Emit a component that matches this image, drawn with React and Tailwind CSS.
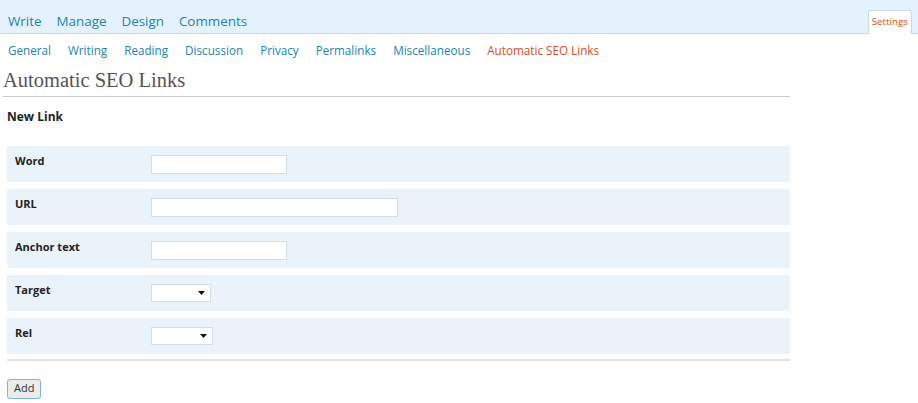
import { useState } from "react";

const mainMenu = ["Write", "Manage", "Design", "Comments"];
const subMenu = ["General", "Writing", "Reading", "Discussion", "Privacy", "Permalinks", "Miscellaneous"];

const Select = ({ width }) => (
  <div className={`${width} h-[18px] bg-white border border-[#d1dfea] flex items-center justify-end pr-[5px]`}>
    <svg width="7" height="4" viewBox="0 0 7 4">
      <path d="M0 0h7L3.5 4z" fill="#111" />
    </svg>
  </div>
);

const Row = ({ label, children }) => (
  <div className="flex h-[36px] bg-[#eaf2fa]">
    <div className="w-[144px] pl-[8px] pt-[7px] text-[11px] font-bold text-[#222]">{label}</div>
    <div className="pt-[9px]">{children}</div>
  </div>
);

export default function App() {
  const [form, setForm] = useState({ word: "", url: "", anchor: "" });

  return (
    <div className="w-[918px] h-[403px] bg-white overflow-hidden" style={{ fontFamily: '"Open Sans", "DejaVu Sans", sans-serif' }}>
      {/* Top menu */}
      <div className="h-[34px] bg-[#e4f2fd] border-b border-[#c6d9e9] flex items-end justify-between pl-[8px] pr-[6px]">
        <div className="flex gap-[15px] pb-[2px] text-[13.4px] text-[#2583ad]">
          {mainMenu.map(m => (
            <span key={m}>{m}</span>
          ))}
        </div>
        <div className="h-[24px] -mb-px px-[3px] bg-white border border-b-0 border-[#c6d9e9] rounded-t-[3px] text-[9.8px] text-[#d54e21] flex items-center">
          Settings
        </div>
      </div>

      {/* Sub menu */}
      <div className="flex gap-[17px] pl-[8px] pt-[8px] text-[11.7px] text-[#2583ad]">
        {subMenu.map(s => (
          <span key={s}>{s}</span>
        ))}
        <span className="text-[#d54e21]">Automatic SEO Links</span>
      </div>

      <div className="w-[790px] pl-[3px]">
        <h2
          className="text-[20.5px] text-[#555] border-b border-[#cccccc] pb-[3px] mt-[7px] leading-[26px]"
          style={{ fontFamily: '"Liberation Serif", "DejaVu Serif", serif' }}
        >
          Automatic SEO Links
        </h2>

        <div className="pl-[4px]">
          <h3 className="text-[12px] font-bold text-[#222] mt-[11px]">New Link</h3>

          <div className="mt-[20px] flex flex-col gap-[7px]">
            <Row label="Word">
              <input
                className="block w-[136px] h-[19px] bg-white border border-[#d1dfea] outline-none text-[11px] px-1"
                value={form.word}
                onChange={e => setForm({ ...form, word: e.target.value })}
              />
            </Row>
            <Row label="URL">
              <input
                className="block w-[247px] h-[19px] bg-white border border-[#d1dfea] outline-none text-[11px] px-1"
                value={form.url}
                onChange={e => setForm({ ...form, url: e.target.value })}
              />
            </Row>
            <Row label="Anchor text">
              <input
                className="block w-[136px] h-[19px] bg-white border border-[#d1dfea] outline-none text-[11px] px-1"
                value={form.anchor}
                onChange={e => setForm({ ...form, anchor: e.target.value })}
              />
            </Row>
            <Row label="Target">
              <Select width="w-[60px]" />
            </Row>
            <Row label="Rel">
              <Select width="w-[62px]" />
            </Row>
          </div>

          <div className="mt-[5px] h-[2px] bg-[#e2e2e2]" />

          <button className="mt-[18px] h-[20px] px-[6px] bg-[#ececec] border border-[#80b5d0] rounded-[3px] text-[11px] text-[#333] flex items-center">
            Add
          </button>
        </div>
      </div>
    </div>
  );
}
